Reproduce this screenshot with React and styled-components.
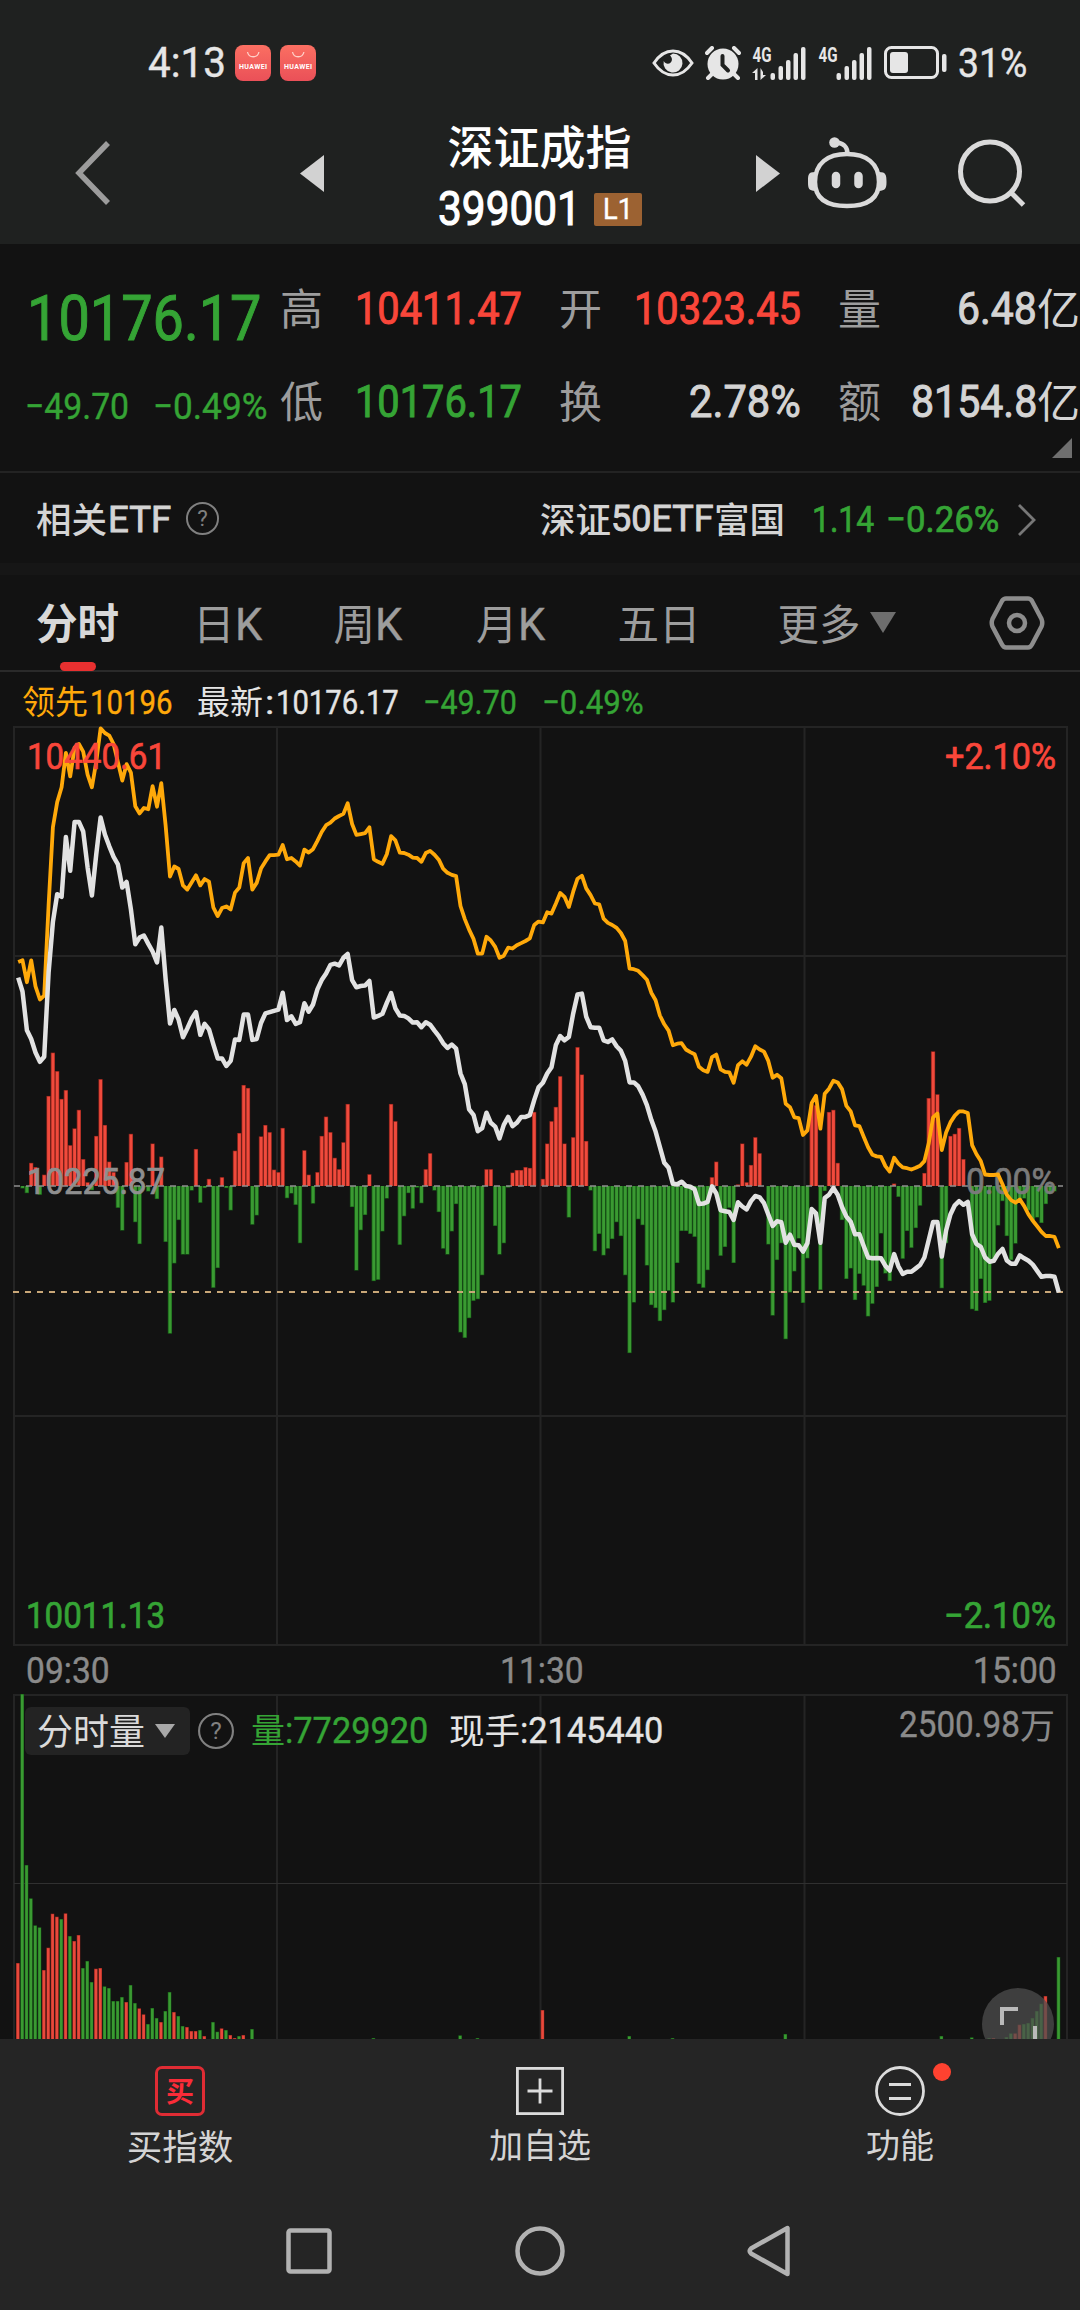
import React, { useLayoutEffect, useRef, useState } from 'react';
import styled, { createGlobalStyle } from 'styled-components';

const RED = '#f9463a';
const GREEN = '#35a435';
const ORANGE = '#ffa90a';
const LIGHT = '#dedede';
const GREY = '#8a8a8a';

//Minute data, one value per minute. Prices are measured down from the top of the day's range
const price = [
	612, 645, 737, 758, 790, 812, 800, 600, 480, 414, 420, 278, 358, 242, 242, 265, 350, 417, 320, 232,
	272, 300, 325, 343, 398, 385, 450, 533, 517, 512, 532, 550, 576, 493, 615, 721, 689, 712, 754, 733,
	710, 694, 748, 722, 735, 770, 804, 804, 822, 810, 759, 760, 700, 700, 760, 758, 720, 697, 694, 691,
	688, 648, 713, 704, 722, 718, 673, 693, 676, 640, 618, 602, 582, 579, 583, 565, 556, 618, 635, 632,
	631, 620, 707, 703, 698, 672, 649, 685, 702, 703, 709, 719, 718, 730, 718, 724, 738, 751, 768, 779,
	771, 781, 840, 865, 925, 938, 977, 970, 933, 957, 966, 994, 962, 943, 965, 957, 943, 943, 939, 903,
	873, 862, 840, 825, 772, 751, 761, 753, 697, 652, 650, 705, 730, 731, 731, 761, 765, 759, 775, 786,
	810, 861, 861, 870, 890, 915, 950, 978, 1015, 1052, 1064, 1102, 1103, 1097, 1107, 1109, 1115, 1150, 1149, 1145,
	1108, 1125, 1165, 1167, 1169, 1188, 1146, 1156, 1163, 1143, 1131, 1134, 1148, 1175, 1202, 1191, 1193, 1242, 1223, 1247,
	1248, 1263, 1243, 1162, 1172, 1242, 1136, 1128, 1112, 1128, 1157, 1180, 1192, 1222, 1222, 1250, 1277, 1279, 1278, 1279,
	1297, 1308, 1269, 1298, 1316, 1311, 1311, 1303, 1295, 1277, 1235, 1193, 1193, 1275, 1213, 1175, 1153, 1143, 1152, 1145,
	1222, 1245, 1252, 1277, 1287, 1285, 1268, 1257, 1284, 1292, 1292, 1272, 1279, 1285, 1294, 1309, 1323, 1321, 1321, 1323,
	1360,
];

const leading = [
	575, 571, 623, 571, 633, 664, 655, 440, 255, 195, 160, 78, 134, 65, 57, 75, 130, 160, 100, 20,
	31, 37, 57, 100, 144, 105, 125, 205, 222, 209, 212, 157, 206, 150, 250, 372, 348, 354, 393, 403,
	386, 369, 393, 378, 384, 445, 466, 447, 443, 450, 410, 398, 340, 328, 403, 387, 353, 336, 321, 321,
	320, 297, 331, 328, 336, 346, 308, 315, 307, 287, 266, 250, 244, 234, 228, 223, 198, 247, 273, 271,
	269, 255, 331, 337, 342, 319, 276, 286, 315, 316, 320, 327, 328, 337, 316, 311, 320, 332, 353, 363,
	368, 371, 442, 473, 498, 520, 555, 555, 515, 524, 539, 565, 560, 541, 543, 535, 530, 525, 519, 487,
	479, 481, 457, 460, 436, 411, 420, 444, 408, 377, 370, 400, 416, 436, 438, 472, 482, 487, 494, 506,
	525, 591, 592, 596, 606, 617, 648, 666, 702, 723, 738, 773, 769, 768, 783, 789, 794, 824, 832, 836,
	801, 795, 830, 836, 837, 862, 820, 811, 819, 800, 775, 783, 788, 810, 850, 843, 851, 912, 920, 944,
	946, 986, 975, 910, 893, 971, 888, 876, 857, 861, 877, 917, 930, 963, 965, 990, 1015, 1033, 1037, 1038,
	1060, 1073, 1040, 1054, 1063, 1065, 1068, 1064, 1059, 1048, 1005, 944, 935, 1022, 980, 956, 940, 930, 930, 934,
	1010, 1032, 1048, 1080, 1081, 1081, 1080, 1103, 1128, 1141, 1147, 1139, 1155, 1175, 1190, 1203, 1216, 1226, 1226, 1228,
	1255,
];

//Momentum bars, above zero is red and below is green
const momentum = [
	0, -6, -17, 55, 45, -21, 27, 214, 317, 273, 207, 228, 97, 137, 181, 64, 9, -10, 119, 254,
	145, 58, 33, -52, -106, 57, 124, -86, -138, -3, -13, 101, -31, 70, -133, -351, -184, -81, -163, -163,
	-11, 88, -40, -5, 17, -242, -195, 21, -5, -58, 84, 126, 240, 233, -92, -70, 118, 145, 128, 39,
	33, 138, -29, -18, -45, -136, 85, 27, -42, 33, 119, 165, 128, 67, 40, 104, 195, -50, -201, -105,
	-69, 28, -226, -223, -108, -30, 195, 154, -140, -72, -17, -54, -4, -41, 40, 78, -11, -62, -149, -163,
	-108, -43, -348, -361, -314, -273, -269, -212, 40, 40, -95, -163, -136, -4, 32, 38, 38, 45, 43, 176,
	0, 17, 101, 154, 188, 261, 101, -75, 116, 330, 265, 107, -11, -155, -114, -165, -149, -126, -86, -119,
	-212, -397, -277, -79, -93, -189, -283, -290, -321, -295, -249, -277, -183, -107, -107, -114, -121, -233, -242, -200,
	21, 58, -166, -145, -52, -183, 4, 101, 9, 50, 116, 78, 0, -139, -308, -176, -136, -364, -253, -203,
	-125, -278, -172, 195, 192, -247, -12, 176, 181, 55, -81, -221, -196, -271, -209, -237, -310, -280, -240, -113,
	-208, -226, 6, -26, -173, -107, -147, -100, -47, 31, 209, 320, 218, -243, -136, 119, 124, 138, 64, 0,
	-293, -297, -221, -278, -273, -176, -94, -36, -119, -176, -137, -36, -30, -58, -85, -75, -88, -43, -15, -13,
];

//Volume at the start of the session, a minus marks a falling minute
const openVolume = [
	228, -1035, -522, -422, -341, -335, 207, 274, 376, 367, -360, 377, -309, 294, 312, -213, -234, -171, 211, 213,
	-158, -153, -114, -114, -126, 111, -162, -108, 92, 74, -45, -93, -63, 51, -84, -141, 81, -69, -39, 36,
	24, 24, -27, 9, 0, -51, -22, 32, -27, 12, 3, -9, 12, 0, -30,
];
const laterVolume = {
	82: -3, 102: -11, 106: -3, 121: 87, 141: -9, 151: -3, 177: -15, 213: -9, 220: -5, 224: -3, 225: 3,
	228: -6, 229: -17, 230: 17, 231: 43, 232: -45, 233: -48, 234: -63, 235: -84, 236: -106, 237: 129, 240: -246,
};

const STEP = 4.336;
const UNIT = 2.376;
const ZERO = 460;
const toX = i => 18.2 + i * STEP;
const toY = v => v / UNIT - 6;
const toPoints = list => list.map((v, i) => `${toX(i).toFixed(1)},${toY(v).toFixed(1)}`).join(' ');

//Squeezes the glyphs so that the text takes exactly the given width
const Fit = ({ width, children, ...rest }) => {
	const ref = useRef(null);
	const [scale, setScale] = useState(1);

	useLayoutEffect(() => {
		setScale(width / ref.current.offsetWidth);
	}, [width])

	return (
		<FitBox $width={width} {...rest}>
			<FitText ref={ref} style={{ transform: `scaleX(${scale})` }}>{children}</FitText>
		</FitBox>
	)
}

const HuaweiIcon = () => (
	<svg width='36' height='36' viewBox='0 0 36 36'>
		<defs>
			<linearGradient id='huawei' x1='0' y1='0' x2='0' y2='1'>
				<stop offset='0' stopColor='#fb6f62'/>
				<stop offset='1' stopColor='#ea5058'/>
			</linearGradient>
		</defs>
		<rect width='36' height='36' rx='8' fill='url(#huawei)'/>
		<path d='M12.500 7a5.800 5.800 0 0 0 11.400 0' fill='none' stroke='#ffd0c8' strokeWidth='1.300'/>
		<text x='18' y='24' textAnchor='middle' fontFamily='Roboto, sans-serif' fontWeight='700' fontSize='7' fill='#fff' textLength='28'>HUAWEI</text>
	</svg>
)

const Signal = ({ data }) => (
	<svg width='55' height='48' viewBox='0 -6 55 48' fill='#e6e6e6'>
		<text x='0.500' y='17' fontFamily='Roboto, sans-serif' fontWeight='700' fontSize='21' textLength='19' lengthAdjust='spacingAndGlyphs'>4G</text>
		{ data && <path d='M0 28l5.500-5v12H3v-7zM8.500 23v12l5.500-5h-3v-3z'/> }
		<rect x='18.500' y='28' width='4.500' height='7' rx='2'/>
		<rect x='26.500' y='21' width='4.500' height='14' rx='2'/>
		<rect x='34' y='15' width='4.500' height='20' rx='2'/>
		<rect x='41.500' y='8' width='4.500' height='27' rx='2'/>
		<rect x='49' y='2' width='4.500' height='33' rx='2'/>
	</svg>
)

const EyeIcon = () => (
	<svg width='42' height='28' viewBox='0 0 42 28'>
		<path d='M2 14C8 5 14 2 21 2s13 3 19 12c-6 9-12 12-19 12S8 23 2 14z' fill='none' stroke='#e6e6e6' strokeWidth='3'/>
		<path d='M21 4.500a9.500 9.500 0 1 1-9.300 7.500c1.500 3 5 3.500 7 1.500s1.500-5-.700-7z' fill='#e6e6e6'/>
	</svg>
)

const AlarmIcon = () => (
	<svg width='36' height='34' viewBox='0 0 36 34' fill='none' stroke='#e6e6e6' strokeLinecap='round'>
		<circle cx='18' cy='18' r='15.500' fill='#e6e6e6' stroke='none'/>
		<path d='M2 7l5-5M34 7l-5-5M7 28l-4 4M29 28l4 4' strokeWidth='4'/>
		<path d='M17.500 10v9l5.500 5.500' stroke='#1f2120' strokeWidth='4'/>
	</svg>
)

const BatteryIcon = () => (
	<svg width='63' height='34' viewBox='0 0 63 34'>
		<rect x='1.500' y='1.500' width='52' height='30' rx='6' fill='none' stroke='#e6e6e6' strokeWidth='3'/>
		<rect x='6' y='6' width='18' height='21' rx='3' fill='#e6e6e6'/>
		<rect x='58' y='8' width='4.500' height='18' rx='2' fill='#e6e6e6'/>
	</svg>
)

const RobotIcon = () => (
	<svg width='80' height='72' viewBox='0 0 80 72' fill='none' stroke='#dadada' strokeWidth='4.500'>
		<path d='M39 17C58 17 71 26 71 45c0 17-12 24-32 24S7 62 7 45C7 26 20 17 39 17z'/>
		<path d='M39.500 17c0-7-3-10-10-11.500'/>
		<circle cx='26.500' cy='5.500' r='5.300' fill='#dadada' stroke='none'/>
		<path d='M7 35C0 35 0 38 0 45s1 8.500 7 9zM71 35c7 0 7.500 3 7.500 10S77 53.500 71 54z' fill='#dadada' stroke='none'/>
		<path d='M28 39v8M50.500 39v8' strokeWidth='8.500' strokeLinecap='round'/>
	</svg>
)

const SearchIcon = () => (
	<svg width='68' height='68' viewBox='0 0 68 68' fill='none' stroke='#dadada' strokeWidth='5'>
		<circle cx='32' cy='32.500' r='29.500'/>
		<path d='M53 53.500l12.500 12.500'/>
	</svg>
)

const HelpIcon = ({ size }) => (
	<svg width={size} height={size} viewBox='0 0 34 34'>
		<circle cx='17' cy='17' r='16' fill='none' stroke='#808080' strokeWidth='2'/>
		<text x='17' y='25' textAnchor='middle' fontFamily='Roboto, sans-serif' fontSize='23' fill='#808080'>?</text>
	</svg>
)

const stats = [
	{ label: '高', value: '10411.47', width: 167, color: RED },
	{ label: '开', value: '10323.45', width: 167, color: RED },
	{ label: '量', value: '6.48', width: 80, color: '#d4d4d4', unit: '亿' },
	{ label: '低', value: '10176.17', width: 167, color: GREEN },
	{ label: '换', value: '2.78%', width: 112, color: '#d4d4d4' },
	{ label: '额', value: '8154.8', width: 126, color: '#d4d4d4', unit: '亿' },
];

const tabs = [
	{ cjk: '日', latin: 'K', gap: 74 },
	{ cjk: '周', latin: 'K', gap: 72 },
	{ cjk: '月', latin: 'K', gap: 74 },
	{ cjk: '五日', gap: 73 },
	{ cjk: '更多', gap: 77 },
];

const PriceChart = () => (
	<ChartBox>
		<svg width='1080' height='921' viewBox='0 0 1080 921'>
			<g fill='none' stroke='#242424' strokeWidth='2'>
				<rect x='14' y='1' width='1053' height='918'/>
				<path d='M14 230H1067M14 690H1067M277 1V919M540.500 1V919M804.500 1V919'/>
			</g>
			{ momentum.map((v, i) => v !== 0 && (
				<g key={i}>
					<rect x={toX(i) - 2.2} y={v > 0 ? ZERO - v / UNIT : ZERO} width='4.300' height={Math.abs(v) / UNIT} fill={v > 0 ? '#8c231b' : '#175c17'}/>
					<rect x={toX(i) - 1.4} y={v > 0 ? ZERO - v / UNIT + 0.6 : ZERO} width='2.900' height={Math.abs(v) / UNIT - 0.6} fill={v > 0 ? '#f04a3c' : '#3a9a32'}/>
				</g>
			))}
			<path d='M14 460H1063' stroke='#8f8f8f' strokeWidth='1.300' strokeDasharray='6 6'/>
			<path d='M13 566H1063' stroke='#c9a778' strokeWidth='2' strokeDasharray='6 6'/>
			<ChartText x='27' y='468' textLength='138' fill='#8f8f8f'>10225.87</ChartText>
			<ChartText x='966' y='468' textLength='90' fill='#7a7a7a'>0.00%</ChartText>
			<g fill='none' strokeLinejoin='round'>
				<polyline points={toPoints(leading)} stroke={ORANGE} strokeWidth='3.800'/>
				<polyline points={toPoints(price)} stroke='#e2e2e2' strokeWidth='4.500'/>
			</g>
			<ChartText x='27' y='43' textLength='139' fill={RED}>10440.61</ChartText>
			<ChartText x='945' y='43' textLength='111' fill={RED}>+2.10%</ChartText>
			<ChartText x='26' y='902' textLength='139' fill={GREEN}>10011.13</ChartText>
			<ChartText x='944' y='902' textLength='112' fill={GREEN}>−2.10%</ChartText>
		</svg>
	</ChartBox>
)

const VolumeBar = ({ i, v }) => (
	<g>
		<rect x={toX(i) - 2.200} y={345 - Math.abs(v) / 3} width='3.600' height={Math.abs(v) / 3} fill={v > 0 ? '#8c231b' : '#175c17'}/>
		<rect x={toX(i) - 1.600} y={345 - Math.abs(v) / 3 + 0.500} width='2.600' height={Math.abs(v) / 3} fill={v > 0 ? '#e8493c' : '#3a9a32'}/>
	</g>
)

const VolumeChart = () => (
	<VolumePanel>
		<VolumeSvg width='1080' height='345' viewBox='0 0 1080 345'>
			<g fill='none' stroke='#242424' strokeWidth='2'>
				<path d='M14 345V1H1067V345M277 1V345M540.500 1V345M804.500 1V345'/>
				<path d='M14 189.500H1067' stroke='#303030' strokeWidth='1'/>
			</g>
			{ openVolume.map((v, i) => <VolumeBar key={i} i={i} v={v}/>) }
			{ Object.entries(laterVolume).map(([i, v]) => <VolumeBar key={i} i={Number(i)} v={v}/>) }
		</VolumeSvg>
		<VolumeHeader>
			<Select>
				<Cjk $size={36} $color='#dadada'>分时量</Cjk>
				<svg width='22' height='16' viewBox='0 0 22 16'><path d='M1 1h20L11 15z' fill='#a8a8a8'/></svg>
			</Select>
			<HelpIcon size={36}/>
			<VolumeValue $color={GREEN}><Cjk $size={34}>量</Cjk><Fit width={143} $size={36}>:7729920</Fit></VolumeValue>
			<VolumeValue $color='#e4e4e4' $gap={21}><Cjk $size={35.5}>现手</Cjk><Fit width={143} $size={36}>:2145440</Fit></VolumeValue>
			<VolumeMax><Fit width={121} $size={36}>2500.98</Fit><Cjk $size={35}>万</Cjk></VolumeMax>
		</VolumeHeader>
		<ExpandButton>
			<svg width='72' height='72' viewBox='0 0 72 72' fill='none' stroke='#b9b9b9' strokeWidth='4'>
				<path d='M20 37V21H36M53 38V53H38'/>
			</svg>
		</ExpandButton>
	</VolumePanel>
)

const App = () => {
	return (
		<>
			<GlobalStyle/>
			<Screen>
				<StatusBar>
					<Fit width={78} $size={42} $color='#e6e6e6'>4:13</Fit>
					<Apps><HuaweiIcon/><HuaweiIcon/></Apps>
					<StatusIcons>
						<EyeIcon/>
						<AlarmIcon/>
						<Signal data/>
						<Signal/>
						<BatteryIcon/>
						<Percent><Fit width={69} $size={40} $color='#e6e6e6'>31%</Fit></Percent>
					</StatusIcons>
				</StatusBar>

				<TitleBar>
					<svg width='36' height='64' viewBox='0 0 36 64'><path d='M33 2L4 32l29 30' fill='none' stroke='#9c9c9c' strokeWidth='5.500'/></svg>
					<Prev width='24' height='37' viewBox='0 0 24 37'><path d='M24 0v37L0 18.500z' fill='#d2d2d2'/></Prev>
					<Title>
						<Cjk $size={46} $weight={500} $color='#fff'>深证成指</Cjk>
						<Code>
							<Fit width={143} $size={48} $color='#fff' $stroke={1.1}>399001</Fit>
							<Badge><Fit width={30} $size={29} $color='#fff'>L1</Fit></Badge>
						</Code>
					</Title>
					<Next width='25' height='37' viewBox='0 0 25 37'><path d='M0 0v37l24-18.500z' fill='#d2d2d2'/></Next>
					<Tools><RobotIcon/><SearchIcon/></Tools>
				</TitleBar>

				<Quote>
					<Last>
						<Fit width={234} $size={63} $color={GREEN} $stroke={1}>10176.17</Fit>
						<Change>
							<Fit width={104} $size={37} $color={GREEN}>−49.70</Fit>
							<Fit width={114} $size={37} $color={GREEN}>−0.49%</Fit>
						</Change>
					</Last>
					<Stats>
						{ stats.map(stat => (
							<Stat key={stat.label}>
								<Cjk $size={43} $color='#9d9d9d'>{stat.label}</Cjk>
								<StatValue $color={stat.color}>
									<Fit width={stat.width} $size={45} $stroke={1}>{stat.value}</Fit>
									{ stat.unit && <Cjk $size={43}>{stat.unit}</Cjk> }
								</StatValue>
							</Stat>
						))}
					</Stats>
					<Corner/>
				</Quote>

				<EtfRow>
					<Cjk $size={35.5} $weight={500}>相关</Cjk>
					<Fit width={63} $size={36} $stroke={0.9}>ETF</Fit>
					<Help><HelpIcon size={33}/></Help>
					<Fund>
						<Cjk $size={35.5} $weight={500}>深证</Cjk>
						<Fit width={103} $size={36} $stroke={0.9}>50ETF</Fit>
						<Cjk $size={35.5} $weight={500}>富国</Cjk>
					</Fund>
					<Fit width={62} $size={37} $color={GREEN} $stroke={0.7}>1.14</Fit>
					<FundChange><Fit width={113} $size={37} $color={GREEN} $stroke={0.7}>−0.26%</Fit></FundChange>
					<svg width='20' height='34' viewBox='0 0 20 34'><path d='M2 2l15 15L2 32' fill='none' stroke='#777' strokeWidth='2.800'/></svg>
				</EtfRow>
				<Divider/>

				<Tabs>
					<ActiveTab><Cjk $size={41.5} $weight={700}>分时</Cjk></ActiveTab>
					{ tabs.map(tab => (
						<Tab key={tab.cjk} $gap={tab.gap}>
							<Cjk $size={41.5}>{tab.cjk}</Cjk>
							{ tab.latin && <Fit width={27} $size={45}>{tab.latin}</Fit> }
						</Tab>
					))}
					<Caret width='26' height='21' viewBox='0 0 26 21'><path d='M0 0h26L13 21z' fill='#6e6e6e'/></Caret>
					<Settings width='56' height='54' viewBox='0 0 56 54' fill='none' stroke='#8d8d8d' strokeWidth='4.500'>
						<path d='M17 2.500H39Q41.500 2.500 43 5L52.500 23Q54 27 52.500 30.500L43 48.500Q41.500 51.500 39 51.500H17Q14.500 51.500 13 48.500L3.500 30.500Q2 27 3.500 23L13 5Q14.500 2.500 17 2.500Z'/>
						<circle cx='28' cy='27' r='8'/>
					</Settings>
				</Tabs>

				<InfoRow>
					<Info $color={ORANGE}><Cjk $size={33}>领先</Cjk><Fit width={83} $size={34}>10196</Fit></Info>
					<Info $color='#e4e4e4' $gap={24}><Cjk $size={33}>最新</Cjk><Fit width={9} $size={34}>:</Fit><Fit width={123} $size={34}>10176.17</Fit></Info>
					<Info $color={GREEN} $gap={24}><Fit width={94} $size={34}>−49.70</Fit></Info>
					<Info $color={GREEN} $gap={25}><Fit width={102} $size={34}>−0.49%</Fit></Info>
				</InfoRow>

				<PriceChart/>

				<Times>
					<Fit width={84} $size={36}>09:30</Fit>
					<Fit width={84} $size={36}>11:30</Fit>
					<Fit width={84} $size={36}>15:00</Fit>
				</Times>

				<VolumeChart/>

				<Actions>
					<Action>
						<BuyIcon>买</BuyIcon>
						<Cjk $size={35.5}>买指数</Cjk>
					</Action>
					<Action>
						<svg width='50' height='50' viewBox='0 0 50 50' fill='none' stroke='#dcdcdc' strokeWidth='2.800'>
							<rect x='2.400' y='2.400' width='45.200' height='45.200'/>
							<path d='M25 12.500v25M12.500 25h25'/>
						</svg>
						<Cjk $size={34}>加自选</Cjk>
					</Action>
					<Action>
						<svg width='50' height='50' viewBox='0 0 50 50' fill='none' stroke='#dcdcdc' strokeWidth='2.800'>
							<circle cx='25' cy='25' r='23.500'/>
							<path d='M14 18.500h22M14 32.500h22'/>
						</svg>
						<Cjk $size={34}>功能</Cjk>
						<Dot/>
					</Action>
				</Actions>

				<NavBar>
					<svg width='46' height='46' viewBox='0 0 46 46'><rect x='2.500' y='2.500' width='41' height='41' rx='2' fill='none' stroke='#b2b2b2' strokeWidth='4.500'/></svg>
					<svg width='50' height='50' viewBox='0 0 50 50'><circle cx='25' cy='25' r='22.500' fill='none' stroke='#b2b2b2' strokeWidth='4.500'/></svg>
					<svg width='44' height='52' viewBox='0 0 44 52'><path d='M40.500 3V49L4 28.500Q1.500 26 4 23.500Z' fill='none' stroke='#b2b2b2' strokeWidth='4.500' strokeLinejoin='round'/></svg>
				</NavBar>
			</Screen>
		</>
	)
}

const GlobalStyle = createGlobalStyle`
	* { box-sizing: border-box; }
	body {
		margin: 0;
		background: #121212;
	}
	svg { display: block; flex: none; }
`;

const Screen = styled.div`
	width: 1080px;
	height: 2310px;
	display: flex;
	flex-direction: column;
	overflow: hidden;
	background: #121212;
	color: ${LIGHT};
	font-family: Roboto, 'Noto Sans CJK SC', sans-serif;
`;

const FitBox = styled.span`
	flex: none;
	display: block;
	width: ${p => p.$width}px;
	font-size: ${p => p.$size}px;
	line-height: 1;
	-webkit-text-stroke: ${p => p.$stroke || 0.4}px currentColor;
	${p => p.$color && `color: ${p.$color};`}
`;
const FitText = styled.span`
	display: inline-block;
	white-space: nowrap;
	transform-origin: left center;
`;
const Cjk = styled.span`
	flex: none;
	font-family: 'Noto Sans CJK SC', sans-serif;
	font-size: ${p => p.$size}px;
	font-weight: ${p => p.$weight || 400};
	line-height: 1;
	padding-bottom: 0.1em;
	white-space: nowrap;
	${p => p.$color && `color: ${p.$color};`}
`;

const StatusBar = styled.div`
	height: 102px;
	padding: 23px 53px 0 148px;
	display: flex;
	align-items: center;
	background: #1f2120;
`;
const Apps = styled.div`
	display: flex;
	gap: 9px;
	margin-left: 9px;
`;
const StatusIcons = styled.div`
	display: flex;
	align-items: center;
	gap: 11px;
	margin-left: auto;
`;
const Percent = styled.div`
	padding-top: 3px;
`;

const TitleBar = styled.div`
	height: 142px;
	padding: 0 54px 0 75px;
	display: flex;
	align-items: center;
	background: #1f2120;
`;
const Prev = styled.svg`
	margin-left: 189px;
`;
const Next = styled.svg`
	margin-left: 1px;
`;
const Title = styled.div`
	width: 431px;
	display: flex;
	flex-direction: column;
	align-items: center;
	gap: 14px;
	padding-top: 8px;
`;
const Code = styled.div`
	display: flex;
	align-items: center;
	gap: 13px;
`;
const Badge = styled.div`
	width: 48px;
	height: 33px;
	border-radius: 2px;
	background: #9c6232;
	display: flex;
	align-items: center;
	justify-content: center;
`;
const Tools = styled.div`
	display: flex;
	align-items: center;
	gap: 70px;
	margin-left: auto;
`;

const Quote = styled.div`
	position: relative;
	height: 229px;
	display: flex;
	border-bottom: 2px solid #232323;
`;
const Last = styled.div`
	width: 280px;
	padding: 43px 0 0 27px;
	display: flex;
	flex-direction: column;
	gap: 38px;
`;
const Change = styled.div`
	display: flex;
	gap: 24px;
	margin-left: -2px;
`;
const Stats = styled.div`
	flex: 1;
	display: grid;
	grid-template-columns: 279px 279px 242px;
	grid-template-rows: 93px 93px;
	padding-top: 18px;
`;
const Stat = styled.div`
	display: flex;
	align-items: center;
	justify-content: space-between;
	padding-right: 37px;
	&:nth-child(3n) { padding-right: 0; }
`;
const StatValue = styled.div`
	display: flex;
	align-items: center;
	color: ${p => p.$color};
`;
const Corner = styled.div`
	position: absolute;
	right: 8px;
	bottom: 13px;
	border-left: 20px solid transparent;
	border-bottom: 20px solid #6f6f6f;
`;

const EtfRow = styled.div`
	height: 90px;
	padding: 3px 43px 0 36px;
	display: flex;
	align-items: center;
	color: #d4d4d4;
	& > :nth-child(2) { margin-left: 1px; }
`;
const Help = styled.div`
	margin-left: 15px;
	padding-bottom: 3px;
`;
const Fund = styled.div`
	display: flex;
	align-items: center;
	margin: 0 27px 0 auto;
`;
const FundChange = styled.div`
	margin: 0 18px 0 12px;
`;
const Divider = styled.div`
	height: 12px;
	background: #161616;
`;

const Tabs = styled.div`
	height: 97px;
	padding: 0 35px 0 36px;
	display: flex;
	align-items: center;
	border-bottom: 2px solid #2a2a2a;
`;
const ActiveTab = styled.div`
	position: relative;
	display: flex;
	padding-top: 3px;
	color: #d8d8d8;
	&::after {
		content: '';
		position: absolute;
		left: 24px;
		bottom: -24px;
		width: 36px;
		height: 9px;
		border-radius: 5px;
		background: #e83030;
	}
`;
const Tab = styled.div`
	display: flex;
	align-items: center;
	margin-left: ${p => p.$gap}px;
	padding-top: 4px;
	color: #9d9d9d;
`;
const Caret = styled.svg`
	margin-left: 9px;
`;
const Settings = styled.svg`
	margin-left: auto;
`;

const InfoRow = styled.div`
	height: 54px;
	padding: 6px 0 0 22px;
	display: flex;
	align-items: center;
`;
const Info = styled.div`
	display: flex;
	align-items: center;
	gap: 2px;
	margin-left: ${p => p.$gap || 0}px;
	color: ${p => p.$color};
`;

const ChartBox = styled.div`
	height: 921px;
`;
const ChartText = styled.text.attrs({ lengthAdjust: 'spacingAndGlyphs' })`
	font-family: Roboto, sans-serif;
	font-size: 36px;
	stroke: ${p => p.fill};
	stroke-width: 0.7px;
`;
const Times = styled.div`
	height: 47px;
	padding: 0 23px 0 26px;
	display: flex;
	align-items: center;
	justify-content: space-between;
	color: ${GREY};
`;

const VolumePanel = styled.div`
	position: relative;
	height: 345px;
	overflow: hidden;
`;
const VolumeSvg = styled.svg`
	position: absolute;
	inset: 0;
`;
const VolumeHeader = styled.div`
	position: relative;
	height: 72px;
	padding: 1px 25px 0 25px;
	display: flex;
	align-items: center;
`;
const Select = styled.div`
	width: 165px;
	height: 48px;
	margin-right: 8px;
	padding: 1px 0 0 12px;
	display: flex;
	align-items: center;
	gap: 9px;
	border-radius: 6px;
	background: #232323;
`;
const VolumeValue = styled.div`
	display: flex;
	align-items: center;
	margin-left: ${p => p.$gap || 17}px;
	padding-top: 1px;
	color: ${p => p.$color};
`;
const VolumeMax = styled.div`
	display: flex;
	align-items: center;
	margin-left: auto;
	padding-bottom: 11px;
	color: ${GREY};
`;
const ExpandButton = styled.div`
	position: absolute;
	right: 26px;
	top: 294px;
	width: 72px;
	height: 72px;
	border-radius: 50%;
	background: rgba(78, 78, 78, 0.74);
`;

const Actions = styled.div`
	height: 154px;
	display: flex;
	background: #252525;
`;
const Action = styled.div`
	position: relative;
	flex: 1;
	padding-top: 27px;
	display: flex;
	flex-direction: column;
	align-items: center;
	gap: 11px;
	color: #d4d4d4;
`;
const BuyIcon = styled.div`
	width: 50px;
	height: 50px;
	border: 3px solid #e02c34;
	border-radius: 7px;
	display: flex;
	justify-content: center;
	color: #fa2c38;
	font: 700 28px/42px 'Noto Sans CJK SC', sans-serif;
`;
const Dot = styled.span`
	position: absolute;
	left: 213px;
	top: 24px;
	width: 18px;
	height: 18px;
	border-radius: 50%;
	background: #ff4230;
`;
const NavBar = styled.div`
	flex: 1;
	padding: 0 289px 2px 286px;
	display: flex;
	align-items: center;
	justify-content: space-between;
	background: #252525;
`;

export default App;
